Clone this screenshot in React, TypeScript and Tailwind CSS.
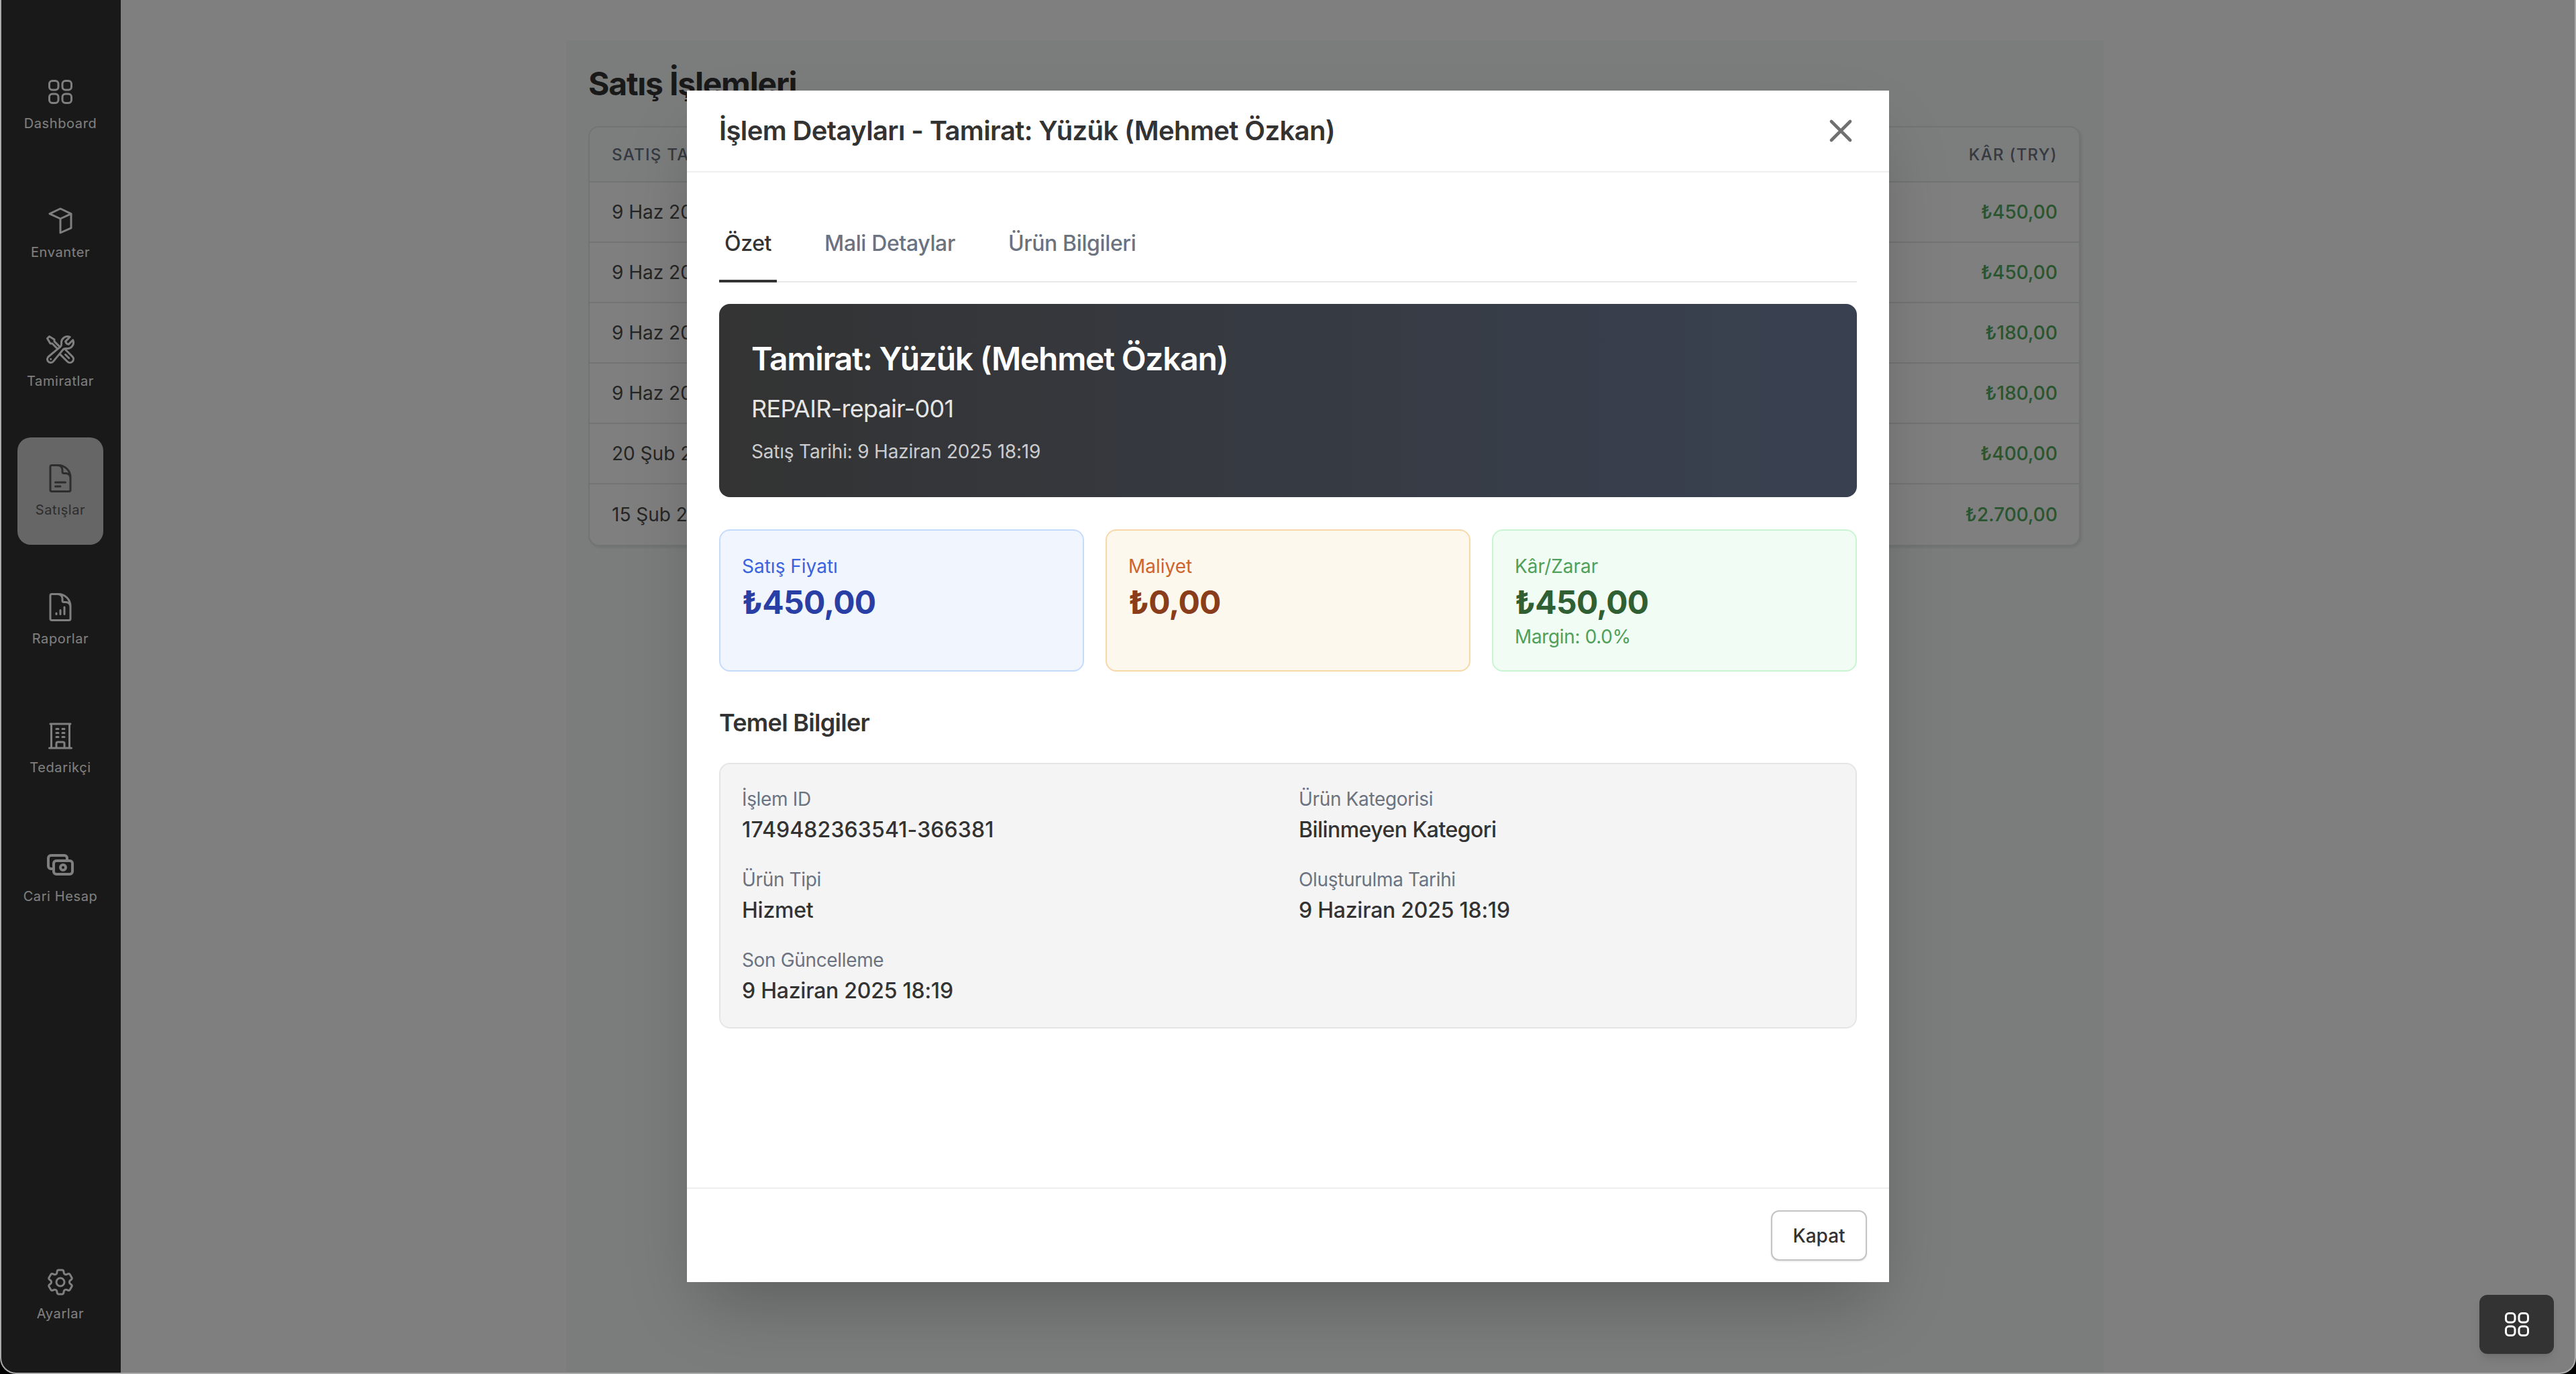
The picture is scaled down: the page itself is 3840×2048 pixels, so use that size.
import React from 'react';
import {
  HiOutlineSquares2X2,
  HiOutlineWrenchScrewdriver,
  HiOutlineDocumentText,
  HiOutlineDocumentChartBar,
  HiOutlineBuildingOffice,
  HiOutlineCog6Tooth,
  HiOutlineXMark,
} from 'react-icons/hi2';
import { HiOutlineCash } from 'react-icons/hi';

const CubeIcon: React.FC<{ className?: string }> = ({ className }) => (
  <svg viewBox="0 0 24 24" fill="none" stroke="currentColor" strokeWidth={1.5} strokeLinejoin="round" className={className}>
    <path d="M12 3 4 6.8l8 3.7 8-3.7L12 3Z" />
    <path d="M12 10.5V21l8-3.6V6.8" />
  </svg>
);

const navItems = [
  { label: 'Dashboard', icon: HiOutlineSquares2X2 },
  { label: 'Envanter', icon: CubeIcon },
  { label: 'Tamiratlar', icon: HiOutlineWrenchScrewdriver },
  { label: 'Satışlar', icon: HiOutlineDocumentText, active: true },
  { label: 'Raporlar', icon: HiOutlineDocumentChartBar },
  { label: 'Tedarikçi', icon: HiOutlineBuildingOffice },
  { label: 'Cari Hesap', icon: HiOutlineCash },
];

const rows = [
  { date: '9 Haz 2025', profit: '₺450,00' },
  { date: '9 Haz 2025', profit: '₺450,00' },
  { date: '9 Haz 2025', profit: '₺180,00' },
  { date: '9 Haz 2025', profit: '₺180,00' },
  { date: '20 Şub 2025', profit: '₺400,00' },
  { date: '15 Şub 2025', profit: '₺2.700,00' },
];

const infoFields = [
  { label: 'İşlem ID', value: '1749482363541-366381', spacing: 'tracking-[0.1px]' },
  { label: 'Ürün Kategorisi', value: 'Bilinmeyen Kategori', spacing: 'tracking-[-0.55px]' },
  { label: 'Ürün Tipi', value: 'Hizmet', spacing: 'tracking-[-0.25px]' },
  { label: 'Oluşturulma Tarihi', value: '9 Haziran 2025 18:19', spacing: 'tracking-[-0.25px]' },
  { label: 'Son Güncelleme', value: '9 Haziran 2025 18:19', spacing: 'tracking-[-0.25px]' },
];

const NavItem: React.FC<{ label: string; icon: React.ElementType; active?: boolean }> = ({ label, icon: Icon, active }) => (
  <div
    className={`flex h-[160px] w-[128px] flex-col items-center rounded-[20px] pt-[37px] ${
      active ? 'bg-[#cccccc] text-[#5a5a5a]' : 'text-white'
    }`}
  >
    <Icon className="h-[48px] w-[48px]" />
    <span className="mt-[9px] text-[20px] leading-[28px] tracking-[0.6px]">{label}</span>
  </div>
);

const App: React.FC = () => {
  return (
    <div className="h-screen w-full bg-black font-['Inter',sans-serif]">
      <div className="relative flex h-full overflow-hidden rounded-b-[24px] border-x-2 border-b-2 border-[#aaaaaa] bg-white">
        {/* Sidebar */}
        <aside className="flex w-[178px] shrink-0 flex-col items-center justify-between bg-[#333333] pt-[76px] pr-[2px] pb-[36px]">
          <div className="flex flex-col gap-[32px]">
            {navItems.map((item) => (
              <NavItem key={item.label} {...item} />
            ))}
          </div>
          <NavItem label="Ayarlar" icon={HiOutlineCog6Tooth} />
        </aside>

        {/* Page behind the dialog */}
        <main className="flex-1 pt-[60px] pl-[664px]">
          <div className="h-full w-[2292px] bg-[#f7faf9] pr-[35px] pl-[33px]">
            <h1 className="mb-[31px] pt-[33px] text-[48px] leading-[64px] font-bold tracking-[-1.2px] text-[#333333]">Satış İşlemleri</h1>
            <div className="overflow-hidden rounded-[16px] border-2 border-[#e5e7eb] bg-white shadow-[2px_2px_4px_rgba(0,0,0,0.1)]">
              <div className="flex h-[82px] items-center justify-between border-b-2 border-[#e5e7eb] bg-[#f9fafb] pt-[2px] pr-[32px] pl-[33px] text-[24px] font-medium tracking-[1.3px] text-[#6b7280]">
                <span>SATIŞ TARİHİ</span>
                <span>KÂR (TRY)</span>
              </div>
              {rows.map((row, i) => (
                <div
                  key={i}
                  className="flex h-[90px] items-center justify-between border-b-2 border-[#e5e7eb] pr-[32px] pl-[33px] text-[28px] last:border-b-0"
                >
                  <span className="text-[#4b4b4b]">{row.date}</span>
                  <span className="font-medium text-[#55aa5e]">{row.profit}</span>
                </div>
              ))}
            </div>
          </div>
        </main>

        {/* Dialog overlay */}
        <div className="absolute inset-0 flex items-center justify-center bg-black/50">
          <div className="flex h-[1776px] w-[1792px] flex-col bg-white shadow-[0_50px_100px_-24px_rgba(0,0,0,0.25)]">
            <div className="flex h-[122px] shrink-0 items-center justify-between border-b-2 border-[#eeeeee] pr-[44px] pl-[48px]">
              <h2 className="text-[40px] font-semibold tracking-[-0.63px] text-[#333333]">İşlem Detayları - Tamirat: Yüzük (Mehmet Özkan)</h2>
              <HiOutlineXMark strokeWidth={2} className="h-[56px] w-[56px] text-[#707070]" />
            </div>

            <div className="flex-1 px-[48px] pt-[48px]">
              {/* Tabs */}
              <div className="flex gap-[63px] border-b-2 border-[#e8e8e8] tracking-[-0.38px]">
                <div className="-mb-[2px] border-b-4 border-[#333333] px-[8px] pt-[34px] pb-[30px] text-[32px] leading-[48px] font-medium text-[#333333]">
                  Özet
                </div>
                <div className="px-[8px] pt-[34px] pb-[30px] text-[32px] leading-[48px] font-medium text-[#6b7280]">Mali Detaylar</div>
                <div className="px-[8px] pt-[34px] pb-[30px] text-[32px] leading-[48px] font-medium text-[#6b7280]">Ürün Bilgileri</div>
              </div>

              {/* Hero */}
              <div className="mt-[32px] flex h-[288px] flex-col rounded-[16px] bg-gradient-to-r from-[#333333] to-[#394151] px-[48px] pt-[48px]">
                <h3 className="text-[48px] leading-[68px] font-semibold tracking-[-1.27px] text-white">Tamirat: Yüzük (Mehmet Özkan)</h3>
                <p className="mt-[16px] text-[36px] leading-[48px] tracking-[-0.7px] text-[#e5e5e5]">REPAIR-repair-001</p>
                <p className="mt-[20px] text-[28px] leading-[40px] tracking-[-0.2px] text-[#cccccc]">Satış Tarihi: 9 Haziran 2025 18:19</p>
              </div>

              {/* Totals */}
              <div className="mt-[48px] grid grid-cols-3 gap-[32px]">
                <div className="h-[212px] rounded-[16px] border-2 border-[#c5dbfd] bg-[#f0f5fe] px-[32px] pt-[33px]">
                  <p className="text-[28px] leading-[40px] text-[#3b63dd]">Satış Fiyatı</p>
                  <p className="mt-[2px] text-[48px] leading-[64px] font-bold tracking-[-0.7px] text-[#2a3fa5]">₺450,00</p>
                </div>
                <div className="h-[212px] rounded-[16px] border-2 border-[#f8d8a8] bg-[#fdf8ee] px-[32px] pt-[33px]">
                  <p className="text-[28px] leading-[40px] text-[#cf642c]">Maliyet</p>
                  <p className="mt-[2px] text-[48px] leading-[64px] font-bold tracking-[-0.7px] text-[#8a3d1a]">₺0,00</p>
                </div>
                <div className="h-[212px] rounded-[16px] border-2 border-[#c9f5d3] bg-[#f1fcf4] px-[32px] pt-[33px]">
                  <p className="text-[28px] leading-[40px] text-[#4fa05a]">Kâr/Zarar</p>
                  <p className="mt-[2px] text-[48px] leading-[64px] font-bold tracking-[-0.7px] text-[#2f5f33]">₺450,00</p>
                  <p className="mt-[-1px] text-[28px] leading-[40px] tracking-[-0.35px] text-[#4fa05a]">Margin: 0.0%</p>
                </div>
              </div>

              {/* Basic info */}
              <h4 className="mt-[50px] text-[36px] leading-[52px] font-semibold tracking-[-0.7px] text-[#333333]">Temel Bilgiler</h4>
              <div className="mt-[34px] grid grid-cols-2 gap-x-[32px] gap-y-[30px] rounded-[16px] border-2 border-[#e5e5e5] bg-[#f4f4f4] px-[32px] pt-[32px] pb-[30px]">
                {infoFields.map((field) => (
                  <div key={field.label}>
                    <p className="text-[28px] leading-[40px] tracking-[-0.35px] text-[#6b7280]">{field.label}</p>
                    <p className={`mt-[2px] text-[32px] leading-[48px] font-[450] text-[#333333] ${field.spacing}`}>{field.value}</p>
                  </div>
                ))}
              </div>
            </div>

            <div className="flex h-[141px] shrink-0 items-center justify-end border-t-2 border-[#eeeeee] px-[33px]">
              <button className="h-[75px] w-[143px] rounded-[12px] border-2 border-[#c4c4c4] bg-white text-[28px] font-[450] text-[#333333] shadow-sm">
                Kapat
              </button>
            </div>
          </div>
        </div>

        {/* Floating app switcher */}
        <button className="absolute right-[31px] bottom-[28px] flex h-[88px] w-[111px] items-center justify-center rounded-[12px] bg-[#333333] text-white shadow-lg">
          <HiOutlineSquares2X2 className="h-[48px] w-[48px]" />
        </button>
      </div>
    </div>
  );
};

export default App;
